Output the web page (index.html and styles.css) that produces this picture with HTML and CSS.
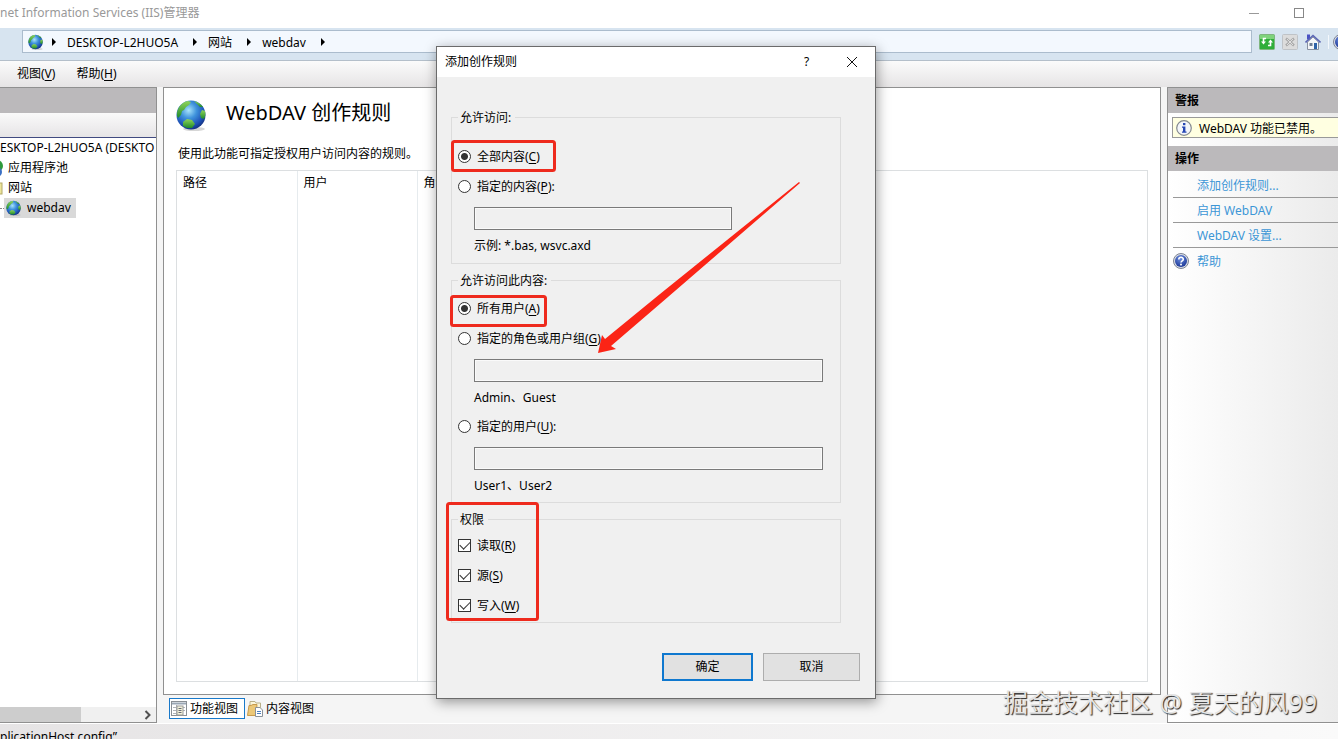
FILE: index.html
```html
<!DOCTYPE html>
<html lang="zh-CN">
<head>
  <meta charset="utf-8">
  <title>Internet Information Services (IIS)管理器</title>
  <link rel="stylesheet" href="styles.css">
</head>
<body>

<!-- shared icons -->
<svg class="defs" width="0" height="0">
  <defs>
    <radialGradient id="sea" cx="42%" cy="34%" r="68%">
      <stop offset="0" stop-color="#a9e4fa"/>
      <stop offset="0.4" stop-color="#3f93dc"/>
      <stop offset="0.8" stop-color="#1c4fb4"/>
      <stop offset="1" stop-color="#14307e"/>
    </radialGradient>
    <linearGradient id="land" x1="0" y1="0" x2="0" y2="1">
      <stop offset="0" stop-color="#8ed45a"/>
      <stop offset="1" stop-color="#1f8a2c"/>
    </linearGradient>
    <radialGradient id="ball" cx="45%" cy="30%" r="70%">
      <stop offset="0" stop-color="#6d8fe0"/>
      <stop offset="1" stop-color="#1c3796"/>
    </radialGradient>
    <symbol id="globe" viewBox="0 0 32 32">
      <ellipse cx="18" cy="30" rx="11" ry="2" fill="#999" opacity="0.4"/>
      <circle cx="15" cy="16" r="14.500" fill="url(#sea)"/>
      <path d="M1 14C2 8 6 3 12 2L15 3L13 6L10 8L8 11L6 12L5 16L2 19L1 17Z" fill="url(#land)"/>
      <path d="M18 2C22 3 25 5 27 8L24 8L21 5Z" fill="url(#land)"/>
      <path d="M26 11L29 12C30 15 29 18 28 20L25 19L24 15Z" fill="url(#land)"/>
      <path d="M7 23L11 20L16 21L19 25L16 29L11 29L7 27Z" fill="url(#land)"/>
    </symbol>
    <symbol id="help" viewBox="0 0 16 16">
      <circle cx="8" cy="8" r="7.5" fill="#d9dde6" stroke="#7d8494" stroke-width="1"/>
      <circle cx="8" cy="8" r="6" fill="url(#ball)"/>
      <path d="M5.8 6.4C5.8 3.6 10.3 3.7 10.3 6.2C10.3 7.8 8 7.8 8 9.6" fill="none" stroke="#fff" stroke-width="1.6"/>
      <rect x="7.1" y="10.7" width="1.8" height="1.7" fill="#fff"/>
    </symbol>
  </defs>
</svg>

<header class="titlebar">
  <span class="title">net Information Services (IIS)管理器</span>
  <button class="win-btn" aria-label="最小化"><svg width="12" height="12"><path d="M1 6.500H11" stroke="#999"/></svg></button>
  <button class="win-btn" aria-label="最大化"><svg width="12" height="12"><rect x="1.500" y="1.500" width="9" height="9" fill="none" stroke="#888"/></svg></button>
</header>

<nav class="addressbar">
  <div class="path">
    <svg width="16" height="16"><use href="#globe"/></svg>
    <i class="arrow"></i>
    <a href="#">DESKTOP-L2HUO5A</a>
    <i class="arrow"></i>
    <a href="#">网站</a>
    <i class="arrow"></i>
    <a href="#">webdav</a>
    <i class="arrow"></i>
  </div>
  <button class="tool" aria-label="刷新">
    <svg width="16" height="16" viewBox="0 0 16 16">
      <rect x="0.500" y="0.500" width="15" height="15" rx="1" fill="#2fae3a" stroke="#7fb67f"/>
      <path d="M1 1H15V5H1Z" fill="#7fd37c"/>
      <path d="M7 4.500H4.500V8" fill="none" stroke="#fff" stroke-width="1.600"/>
      <path d="M2 7.500H7L4.500 10.500Z" fill="#fff"/>
      <path d="M9 11.500H11.500V8" fill="none" stroke="#fff" stroke-width="1.600"/>
      <path d="M9 8.500H14L11.500 5.500Z" fill="#fff"/>
    </svg>
  </button>
  <button class="tool" aria-label="停止" disabled>
    <svg width="16" height="16" viewBox="0 0 16 16">
      <rect x="0.500" y="0.500" width="15" height="15" rx="1" fill="#dcdcdc" stroke="#bfc3c7"/>
      <path d="M4 4.500L12 11.500M12 4.500L4 11.500" stroke="#a9a9a9" stroke-width="2.400"/>
      <path d="M5 5L11 11M11 5L5 11" stroke="#eee" stroke-width="0.800"/>
    </svg>
  </button>
  <button class="tool" aria-label="主页">
    <svg width="16" height="16" viewBox="0 0 16 16">
      <path d="M2.500 8L8 3L13.500 8V15.500H2.500Z" fill="#f3f5f8" stroke="#8790a0"/>
      <rect x="2" y="0.500" width="3" height="5" fill="#4a52c4"/>
      <path d="M0.500 8.500L8 1.500L15.500 8.500" fill="none" stroke="#5b66b4" stroke-width="1.600"/>
      <rect x="9" y="9" width="3" height="6" fill="#2d62a8"/>
      <rect x="4.500" y="9" width="3" height="3" fill="#6d7c94"/>
    </svg>
  </button>
  <i class="divider"></i>
  <button class="tool" aria-label="帮助"><svg width="16" height="16"><use href="#help"/></svg></button>
</nav>

<nav class="menubar">
  <a href="#">视图(<u>V</u>)</a>
  <a href="#">帮助(<u>H</u>)</a>
</nav>

<main class="workspace">
  <aside class="tree-panel">
    <div class="panel-head"></div>
    <div class="tree-tools"></div>
    <ul class="tree">
      <li class="root">ESKTOP-L2HUO5A (DESKTO</li>
      <li class="branch">
        <svg width="3" height="16"><circle cx="-3" cy="6" r="6" fill="#2e9a3c"/><circle cx="-3" cy="12" r="5" fill="#3a6fc4"/></svg>
        应用程序池
      </li>
      <li class="branch">
        <svg width="3" height="16"><rect x="-1" y="3" width="3" height="11" fill="#ece59a" stroke="#b3a968"/></svg>
        网站
      </li>
      <li class="leaf">
        <span class="selected"><svg width="16" height="16"><use href="#globe"/></svg>webdav</span>
      </li>
    </ul>
    <div class="scroll">
      <div class="thumb"></div>
      <svg width="8" height="10"><path d="M1.500 1L5.500 5L1.500 9" fill="none" stroke="#505050" stroke-width="2"/></svg>
    </div>
  </aside>

  <section class="center">
    <div class="feature">
      <div class="feature-head">
        <svg width="32" height="32"><use href="#globe"/></svg>
        <h1>WebDAV 创作规则</h1>
      </div>
      <p>使用此功能可指定授权用户访问内容的规则。</p>
      <div class="rules">
        <table>
          <thead>
            <tr><th>路径</th><th>用户</th><th>角色</th></tr>
          </thead>
          <tbody>
            <tr><td></td><td></td><td></td></tr>
          </tbody>
        </table>
      </div>
    </div>
    <div class="views">
      <button class="view active">
        <svg width="16" height="16" viewBox="0 0 16 16">
          <rect x="0.500" y="0.500" width="15" height="14" fill="#fff" stroke="#8a8f94"/>
          <path d="M1 2.500H15" stroke="#9aa7b4" stroke-width="2"/>
          <path d="M2 6.500H5M2 9.500H5M2 12.500H5M12 6.500H14M12 9.500H14M5.500 4V14" stroke="#b0b4b8"/>
          <rect x="6" y="5" width="6" height="9" fill="#f2f2d8" stroke="#999"/>
          <path d="M7.500 7.500H10.500M7.500 9.500H10.500M7.500 11.500H10.500" stroke="#667"/>
        </svg>
        功能视图
      </button>
      <button class="view">
        <svg width="16" height="16" viewBox="0 0 16 16">
          <path d="M3 0.500H8L9 2H13.500V10H3Z" fill="#fbf6dc" stroke="#b9b08a"/>
          <path d="M0.500 14.500L2 4.500H4L6 3.500H10L9 14.500Z" fill="#ecc878" stroke="#c79a4c"/>
          <path d="M8.500 6.500H13L15.500 9V15.500H8.500Z" fill="#fff" stroke="#8a9199"/>
          <path d="M10 10.500H14M10 12.500H14" stroke="#4c7fc0"/>
        </svg>
        内容视图
      </button>
    </div>
  </section>

  <aside class="actions">
    <h2>警报</h2>
    <div class="alert">
      <svg width="16" height="16" viewBox="0 0 16 16">
        <circle cx="8" cy="8" r="7.300" fill="#f4f6fa" stroke="#84898f" stroke-width="1.200"/>
        <rect x="7" y="3" width="2.400" height="2.200" fill="#2647b4"/>
        <path d="M6 6.500H9.400V11.500H10.500V12.800H6V11.500H7V7.800H6Z" fill="#2647b4"/>
      </svg>
      <span>WebDAV 功能已禁用。</span>
    </div>
    <h2>操作</h2>
    <ul>
      <li><a href="#">添加创作规则...</a></li>
      <li><a href="#">启用 WebDAV</a></li>
      <li><a href="#">WebDAV 设置...</a></li>
      <li><svg width="16" height="16"><use href="#help"/></svg><a href="#">帮助</a></li>
    </ul>
  </aside>
</main>

<footer class="status">plicationHost.config”</footer>

<form class="dialog" role="dialog" aria-labelledby="dialogTitle">
  <div class="dialog-title">
    <span id="dialogTitle">添加创作规则</span>
    <button type="button" class="win-btn" aria-label="帮助">?</button>
    <button type="button" class="win-btn" aria-label="关闭"><svg width="12" height="12"><path d="M1 1L11 11M11 1L1 11" stroke="#111"/></svg></button>
  </div>

  <div class="dialog-body">
    <fieldset class="group roomy">
      <legend>允许访问:</legend>
      <div class="choice">
        <input type="radio" name="content" id="allContent" checked>
        <label for="allContent">全部内容(<u>C</u>)</label>
      </div>
      <div class="choice">
        <input type="radio" name="content" id="someContent">
        <label for="someContent">指定的内容(<u>P</u>):</label>
      </div>
      <input type="text" class="field short" aria-label="指定的内容" disabled>
      <div class="hint">示例: *.bas, wsvc.axd</div>
    </fieldset>

    <fieldset class="group">
      <legend>允许访问此内容:</legend>
      <div class="choice">
        <input type="radio" name="who" id="allUsers" checked>
        <label for="allUsers">所有用户(<u>A</u>)</label>
      </div>
      <div class="choice">
        <input type="radio" name="who" id="roles">
        <label for="roles">指定的角色或用户组(<u>G</u>)</label>
      </div>
      <input type="text" class="field" aria-label="指定的角色或用户组" disabled>
      <div class="hint">Admin、Guest</div>
      <div class="choice">
        <input type="radio" name="who" id="someUsers">
        <label for="someUsers">指定的用户(<u>U</u>):</label>
      </div>
      <input type="text" class="field" aria-label="指定的用户" disabled>
      <div class="hint">User1、User2</div>
    </fieldset>

    <fieldset class="group compact">
      <legend>权限</legend>
      <div class="choice">
        <input type="checkbox" id="read" checked>
        <label for="read">读取(<u>R</u>)</label>
      </div>
      <div class="choice">
        <input type="checkbox" id="source" checked>
        <label for="source">源(<u>S</u>)</label>
      </div>
      <div class="choice">
        <input type="checkbox" id="write" checked>
        <label for="write">写入(<u>W</u>)</label>
      </div>
    </fieldset>

    <div class="buttons">
      <button type="button" class="ok">确定</button>
      <button type="button" class="cancel">取消</button>
    </div>
  </div>

  <!-- red marks over the dialog -->
  <svg class="marks" width="438" height="651" viewBox="437 47 438 651">
    <g fill="none" stroke="#ee2a1d" stroke-width="3">
      <rect x="452.500" y="141.500" width="102" height="29" rx="2"/>
      <rect x="451.500" y="296.500" width="94" height="29" rx="2"/>
      <rect x="447.500" y="503.500" width="90" height="116" rx="2"/>
    </g>
    <path d="M800 183L799 182L660 294L605 339L602 335L598 353L616 349L611 346L668 297Z" fill="#fb2416"/>
  </svg>
</form>

<div class="watermark">掘金技术社区 @ 夏天的风99</div>

</body>
</html>
```
FILE: styles.css
```css
* {
  box-sizing: border-box;
}

body {
  margin: 0;
  min-height: 100vh;
  display: flex;
  flex-direction: column;
  position: relative;
  overflow: hidden;
  background: #f5f5f5;
  color: #000;
  font: 12px/16px "Noto Sans", "Noto Sans CJK SC", sans-serif;
}

button, input {
  font: inherit;
  color: inherit;
  margin: 0;
}

button {
  padding: 0;
  border: none;
  background: none;
}

a {
  color: inherit;
  text-decoration: none;
}

svg {
  display: block;
  flex: none;
}

ul {
  list-style: none;
  margin: 0;
  padding: 0;
}

u {
  text-underline-offset: 2px;
}

.defs {
  position: absolute;
}

/* window frame */
.titlebar {
  height: 28px;
  display: flex;
  align-items: center;
  padding-right: 17px;
  padding-bottom: 3px;
  background: #fff;
  color: #999;
}

.titlebar .title {
  flex: 1;
}

.win-btn {
  width: 45px;
  display: flex;
  justify-content: center;
}

.addressbar {
  height: 33px;
  display: flex;
  align-items: center;
  padding: 0 0 5px 22px;
  background: #d7e4f0;
  border-bottom: 1px solid #b4bfca;
  overflow: hidden;
}

.path {
  flex: 1;
  height: 23px;
  display: flex;
  align-items: center;
  gap: 11px;
  padding-left: 5px;
  margin-right: 7px;
  background: #f3f8fe;
  border: 1px solid #abbccd;
}

.path a {
  padding: 2px 4px 0 0;
}

.path .arrow:nth-of-type(1) {
  margin-left: -3px;
}

.arrow {
  border: 4px solid transparent;
  border-left: 4px solid #000;
  border-right: 0;
}

.tool {
  margin-right: 7px;
}

.divider {
  width: 1px;
  height: 14px;
  margin-right: 4px;
  background: #f4f8fc;
}

.addressbar .tool:last-child {
  margin-right: -11px;
}

.menubar {
  height: 26px;
  display: flex;
  align-items: center;
  gap: 21px;
  padding-left: 17px;
  background: linear-gradient(#fbfbfb, #e6e4e5);
}

/* three panes */
.workspace {
  flex: 1;
  display: flex;
  gap: 6px;
}

.tree-panel {
  width: 157px;
  display: flex;
  flex-direction: column;
  background: #fff;
  border: 1px solid #909090;
  border-left: 0;
}

.panel-head {
  height: 25px;
  background: #bbb9bb;
}

.tree-tools {
  height: 25px;
  background: linear-gradient(#fafafa, #e6e4e6);
  border-bottom: 1px solid #404a80;
}

.tree {
  flex: 1;
  overflow: hidden;
  white-space: nowrap;
}

.tree li {
  height: 20px;
  display: flex;
  align-items: center;
}

.branch {
  gap: 5px;
}

.leaf::before {
  content: "";
  width: 4px;
  border-top: 1px dotted #888;
}

.selected {
  height: 20px;
  display: flex;
  align-items: center;
  gap: 5px;
  padding: 0 5px 0 2px;
  background: #d9d9d9;
}

.scroll {
  height: 15px;
  display: flex;
  align-items: center;
  justify-content: space-between;
  padding-right: 4px;
  background: #f0f0f0;
}

.thumb {
  width: 81px;
  height: 15px;
  background: #cdcdcd;
}

.center {
  flex: 1;
  display: flex;
  flex-direction: column;
}

.feature {
  flex: 1;
  display: flex;
  flex-direction: column;
  padding: 11px 12px 12px;
  background: #fff;
  border: 1px solid #909090;
}

.feature-head {
  display: flex;
  align-items: center;
  gap: 18px;
}

.feature-head h1 {
  margin: 0;
  padding-bottom: 4px;
  font-size: 20px;
  line-height: 28px;
  font-weight: normal;
}

.feature p {
  margin: 15px 2px 8px;
}

.rules {
  flex: 1;
  display: flex;
  border: 1px solid #dcdfe1;
}

.rules table {
  width: 100%;
  table-layout: fixed;
  border-collapse: collapse;
}

.rules th {
  height: 24px;
  padding: 0 6px;
  font-weight: normal;
  text-align: left;
}

.rules th, .rules td {
  border-right: 1px solid #e6ebee;
}

.rules th:last-child, .rules td:last-child {
  border-right: 0;
}

.rules th:nth-child(-n+2) {
  width: 120px;
}

.views {
  height: 28px;
  display: flex;
  align-items: flex-start;
  padding: 3px 6px;
}

.view {
  height: 21px;
  display: flex;
  align-items: center;
  gap: 3px;
  padding: 0 6px 0 1px;
  border: 1px solid transparent;
}

.view.active {
  background: #fff;
  border-color: #1979ca;
}

/* right pane */
.actions {
  width: 171px;
  background: linear-gradient(90deg, #fff, #ebebeb);
  border: 1px solid #909090;
  border-right: 0;
}

.actions h2 {
  margin: 0;
  padding-left: 7px;
  background: #bbb9bb;
  font-size: 12px;
  line-height: 25px;
}

.alert {
  height: 21px;
  display: flex;
  align-items: center;
  gap: 7px;
  margin: 4px 0 8px 4px;
  padding-left: 3px;
  background: #ffffe1;
  border: 1px solid #999;
  border-right: 0;
  white-space: nowrap;
}

.alert span {
  padding-top: 2px;
}

.actions ul {
  padding: 2px 0 0 5px;
}

.actions li {
  height: 25px;
  display: flex;
  align-items: center;
  gap: 8px;
  border-bottom: 1px solid #999;
  color: #3c96d6;
}

.actions li:last-child {
  border: 0;
}

.actions li a {
  padding-top: 2px;
}

.actions li a:first-child {
  margin-left: 24px;
}

.status {
  height: 16px;
  padding-top: 5px;
  overflow: hidden;
  background: linear-gradient(90deg, #e6e4e5, #fafafa);
  border-top: 1px solid #fff;
}

/* dialog */
.dialog {
  position: absolute;
  left: 436px;
  top: 46px;
  width: 440px;
  background: #f0f0f0;
  border: 1px solid #6b6b6b;
  box-shadow: 1px 3px 12px rgba(0,0,0,0.4);
}

.dialog-title {
  height: 30px;
  display: flex;
  align-items: center;
  padding: 0 1px 0 8px;
  background: #fff;
}

.dialog-title span {
  flex: 1;
}

.dialog-body {
  padding: 32px 14px 17px;
}

.group {
  width: 390px;
  margin: 0 0 8px;
  padding: 9px 6px 8px;
  border: 1px solid #dcdcdc;
}

.group.roomy {
  padding: 20px 6px 9px;
}

.group.compact {
  padding: 7px 6px;
}

.group legend {
  padding: 1px 4px 0 2px;
}

.choice {
  height: 20px;
  display: flex;
  align-items: center;
  gap: 6px;
}

.choice + .choice, .hint + .choice {
  margin-top: 10px;
}

.choice label {
  padding-top: 2px;
}

.choice input {
  appearance: none;
  width: 13px;
  height: 13px;
  background: #fff;
  border: 1px solid #333;
}

.choice input[type="radio"] {
  border-radius: 50%;
}

.choice input[type="radio"]:checked {
  background: radial-gradient(circle, #333 3px, #fff 4px);
}

.choice input[type="checkbox"]:checked::after {
  content: "";
  display: block;
  width: 9px;
  height: 5px;
  margin: 1px;
  border: solid #333;
  border-width: 0 0 1px 1px;
  transform: rotate(-45deg);
}

.field {
  display: block;
  width: 349px;
  height: 23px;
  margin: 11px 0 8px 16px;
  background: #f0f0f0;
  border: 1px solid #7a7a7a;
  box-shadow: inset 0 0 0 1px #fafafa;
}

.field.short {
  width: 258px;
}

.hint {
  margin-left: 16px;
}

.buttons {
  display: flex;
  justify-content: flex-end;
  gap: 10px;
  margin-top: 30px;
  padding-right: 1px;
}

.buttons button {
  height: 28px;
  background: #e1e1e1;
}

.ok {
  width: 91px;
  border: 2px solid #0f78cf;
}

.cancel {
  width: 97px;
  border: 1px solid #adadad;
}

.marks {
  position: absolute;
  left: 0;
  top: 0;
  pointer-events: none;
}

.watermark {
  position: absolute;
  right: 21px;
  bottom: 20px;
  color: #e4e4e4;
  font-size: 25px;
  line-height: 34px;
  text-shadow: 1px 1px 1px #222;
}
```
